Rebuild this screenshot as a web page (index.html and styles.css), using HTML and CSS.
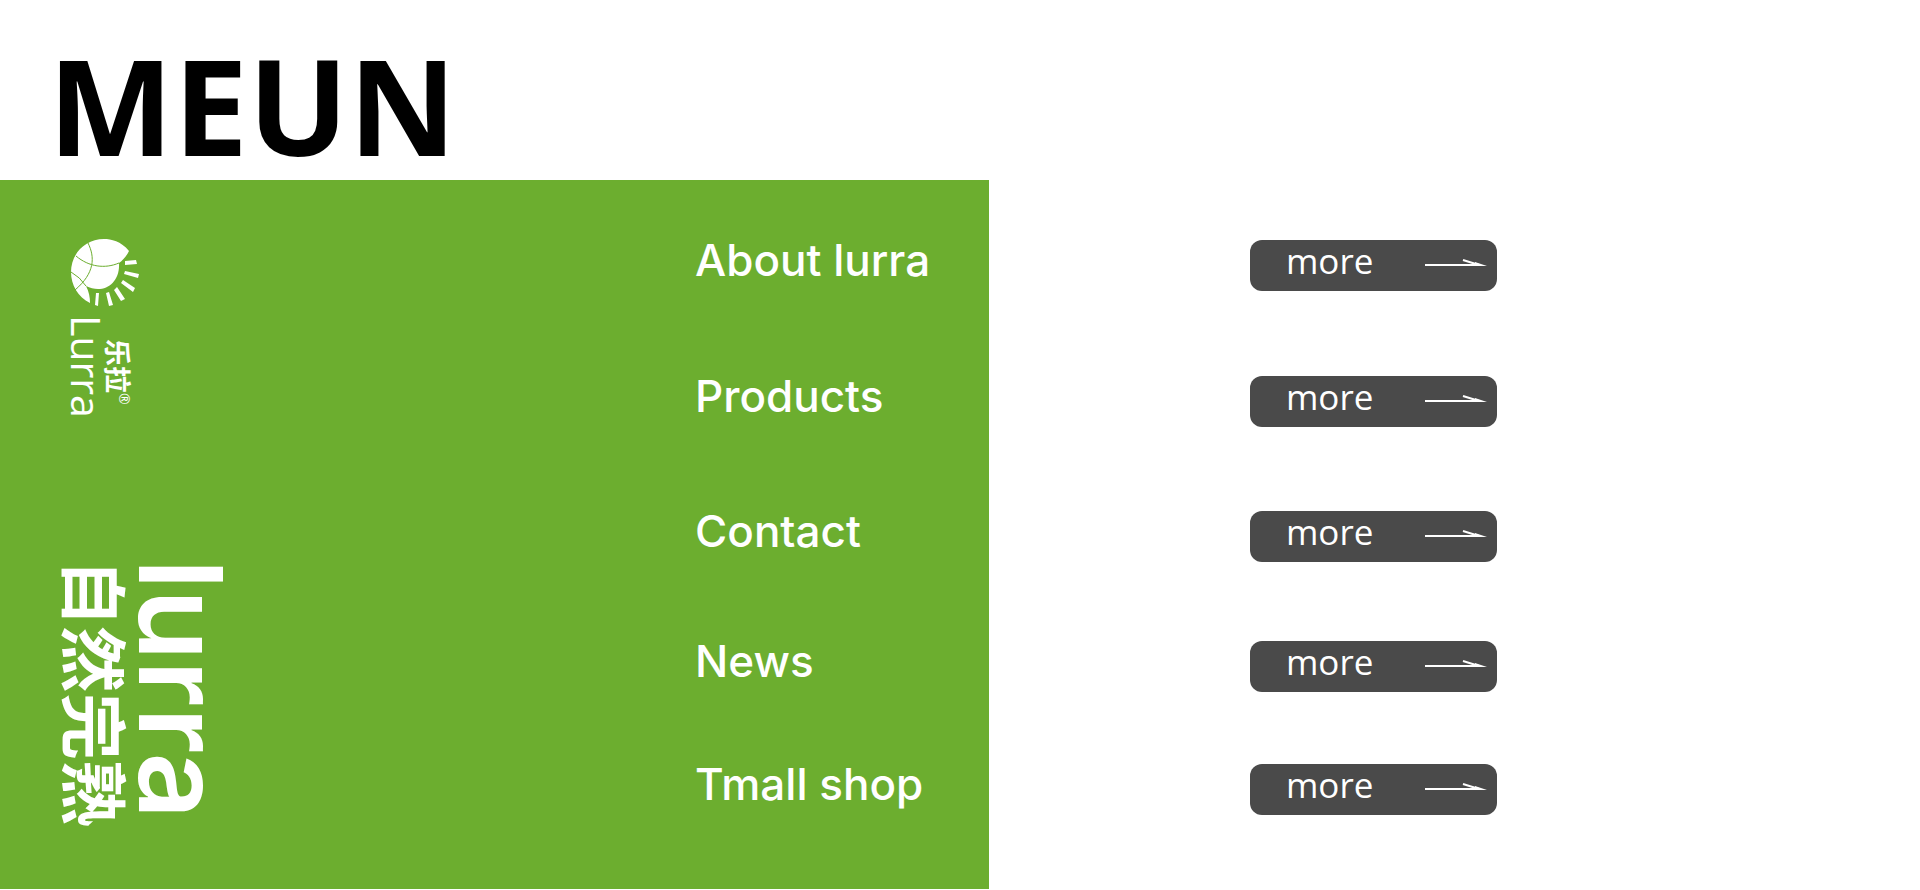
FILE: index.html
```html
<!DOCTYPE html>
<html lang="en">
<head>
<meta charset="utf-8">
<title>Lurra</title>
<link rel="stylesheet" href="styles.css">
</head>
<body>
<header class="header"><h1 class="title">MEUN</h1></header>
<main class="main">
  <section class="panel">
    <div class="logo">
      <svg class="logo-mark" viewBox="0 0 68 68" aria-hidden="true">
        <path fill="#fff" d="M58 12C50 2 40 0 33 0C14 0 0 15 0 33C0 46 7 58 19 64C19 58 18 53 15 47C19 49 23 50 27 50C39 50 49 40 48 24C52 21 55 18 58 12Z"/>
        <path fill="none" stroke="#6cae2f" d="M17 4C24 18 24 34 4 51M5 17C18 28 34 30 48 24M0 33Q9 38 15 47"/>
        <path fill="#fff" d="M54 22L65 21L66 25L54 26ZM54 32L68 35L67 39L53 35ZM52 41L64 49L62 53L50 44ZM46 48L54 60L50 62L43 51ZM38 53L42 66L38 67L35 54ZM25 54L28 54L27 67L24 66Z"/>
      </svg>
      <div class="logo-text">
        <span class="logo-cn" lang="zh">乐拉<sup class="logo-reg">®</sup></span>
        <span class="logo-en">Lurra</span>
      </div>
    </div>
    <div class="slogan">
      <span class="slogan-en">lurra</span>
      <span class="slogan-cn" lang="zh">自然完熟</span>
    </div>
  </section>
  <nav class="nav">
    <ul class="menu">
      <li class="item"><a class="link" href="#about">About lurra</a><button class="more" type="button">more<svg class="arrow" viewBox="0 0 62 10" aria-hidden="true"><path d="M0 7H54L38 2"/><path class="tip" d="M50 8H62L50 4Z"/></svg></button></li>
      <li class="item"><a class="link" href="#products">Products</a><button class="more" type="button">more<svg class="arrow" viewBox="0 0 62 10" aria-hidden="true"><path d="M0 7H54L38 2"/><path class="tip" d="M50 8H62L50 4Z"/></svg></button></li>
      <li class="item"><a class="link" href="#contact">Contact</a><button class="more" type="button">more<svg class="arrow" viewBox="0 0 62 10" aria-hidden="true"><path d="M0 7H54L38 2"/><path class="tip" d="M50 8H62L50 4Z"/></svg></button></li>
      <li class="item"><a class="link" href="#news">News</a><button class="more" type="button">more<svg class="arrow" viewBox="0 0 62 10" aria-hidden="true"><path d="M0 7H54L38 2"/><path class="tip" d="M50 8H62L50 4Z"/></svg></button></li>
      <li class="item"><a class="link" href="#shop">Tmall shop</a><button class="more" type="button">more<svg class="arrow" viewBox="0 0 62 10" aria-hidden="true"><path d="M0 7H54L38 2"/><path class="tip" d="M50 8H62L50 4Z"/></svg></button></li>
    </ul>
  </nav>
</main>
</body>
</html>
```
FILE: styles.css
```css
* { box-sizing: border-box; }
body { margin: 0; background: #fff; color: #000; font-family: "Open Sans", sans-serif; }
.header { padding: 30px 48px 0; }
.title { margin: 0; font-size: 133px; font-weight: 700; line-height: 150px; }
.main { display: grid; grid-template-columns: 36.2% 15.3% 1fr; }
.panel {
  grid-area: 1 / 1 / 2 / 3;
  display: flex;
  flex-direction: column;
  align-items: flex-start;
  gap: 136px;
  padding: 59px 64px 59px;
  background: #6cae2f;
  color: #fff;
}
.logo { display: flex; flex-direction: column; align-items: flex-start; gap: 8px; padding-left: 7px; }
.logo-mark { width: 68px; height: 68px; }
.logo-text, .slogan { writing-mode: vertical-rl; text-orientation: sideways; }
.logo-text { display: flex; flex-direction: column; height: 108px; }
.logo-cn { padding-top: 24px; font: 700 27px/30px "Noto Sans CJK SC", sans-serif; }
.logo-en { font-size: 41px; line-height: 32px; }
.logo-reg { font: 400 14px/12px "Open Sans", sans-serif; vertical-align: 12px; }
.slogan { display: flex; flex-direction: column; }
.slogan-en { font: 600 116px/100px Inter, sans-serif; }
.slogan-cn { font: 700 67px/67px "Noto Sans CJK SC", sans-serif; }
.nav { grid-area: 1 / 2 / 2 / 4; }
.menu { margin: 0; padding: 60px 0 74px; list-style: none; display: grid; grid-template-rows: 136px 135px 130px 123px auto; }
.item { display: flex; align-items: flex-start; }
.link { width: 45.3%; color: #fff; text-decoration: none; font: 500 44px/40px Inter, sans-serif; }
.more {
  display: flex;
  justify-content: space-between;
  width: 247px;
  height: 51px;
  padding: 0 10px 0 36px;
  border: 0;
  border-radius: 12px;
  background: #4a4a4a;
  color: #fff;
  font: 400 35px/42px "Open Sans", sans-serif;
  cursor: pointer;
}
.arrow { width: 62px; height: 10px; margin-top: 18px; fill: none; stroke: #fff; stroke-width: 2; }
.tip { fill: #fff; stroke: none; }
```
